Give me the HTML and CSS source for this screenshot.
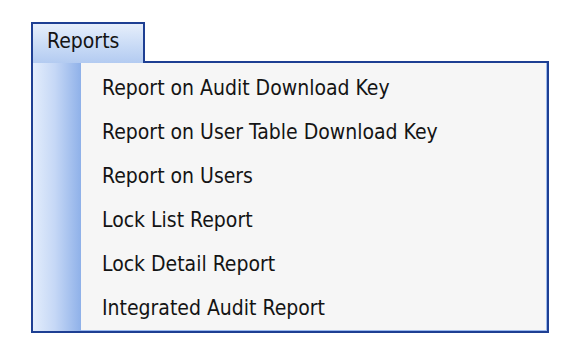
FILE: index.html
```html
<!DOCTYPE html>
<html>
<head>
<meta charset="utf-8">
<link rel="stylesheet" href="styles.css">
</head>
<body>
<div class="wrap">
  <div class="tab">Reports</div>
  <div class="menu">
    <div class="strip"></div>
    <ul class="items">
      <li>Report on Audit Download Key</li>
      <li>Report on User Table Download Key</li>
      <li>Report on Users</li>
      <li>Lock List Report</li>
      <li>Lock Detail Report</li>
      <li>Integrated Audit Report</li>
    </ul>
  </div>
</div>
</body>
</html>
```
FILE: styles.css
```css
html, body {
  margin: 0;
  padding: 0;
  background: #ffffff;
}
.wrap {
  padding: 22px 0 0 31px;
  width: 518px;
  display: flex;
  flex-direction: column;
  align-items: flex-start;
  font-family: "DejaVu Sans Condensed", "DejaVu Sans", sans-serif;
  font-size: 21px;
  color: #141414;
}
.tab {
  position: relative;
  z-index: 1;
  box-sizing: border-box;
  width: 114px;
  height: 41px;
  margin-bottom: -2px;
  padding: 5px 0 0 14px;
  border: 2px solid #1e3f93;
  border-bottom: none;
  background: linear-gradient(to bottom, #e6eefb 0%, #c9dbf6 55%, #b3cbf1 100%);
}
.menu {
  box-sizing: border-box;
  width: 518px;
  height: 272px;
  display: flex;
  border: 2px solid #1e3f93;
  background: #f6f6f6;
  box-shadow: inset -1px -1px 0 #9bb9ee;
}
.strip {
  width: 48px;
  background: linear-gradient(to right, #e3edfc 0%, #c6d8f6 45%, #8fb1e9 100%);
}
.items {
  list-style: none;
  margin: 0;
  padding: 3px 0 0 21px;
}
.items li {
  height: 44px;
  line-height: 44px;
  white-space: nowrap;
}
```
